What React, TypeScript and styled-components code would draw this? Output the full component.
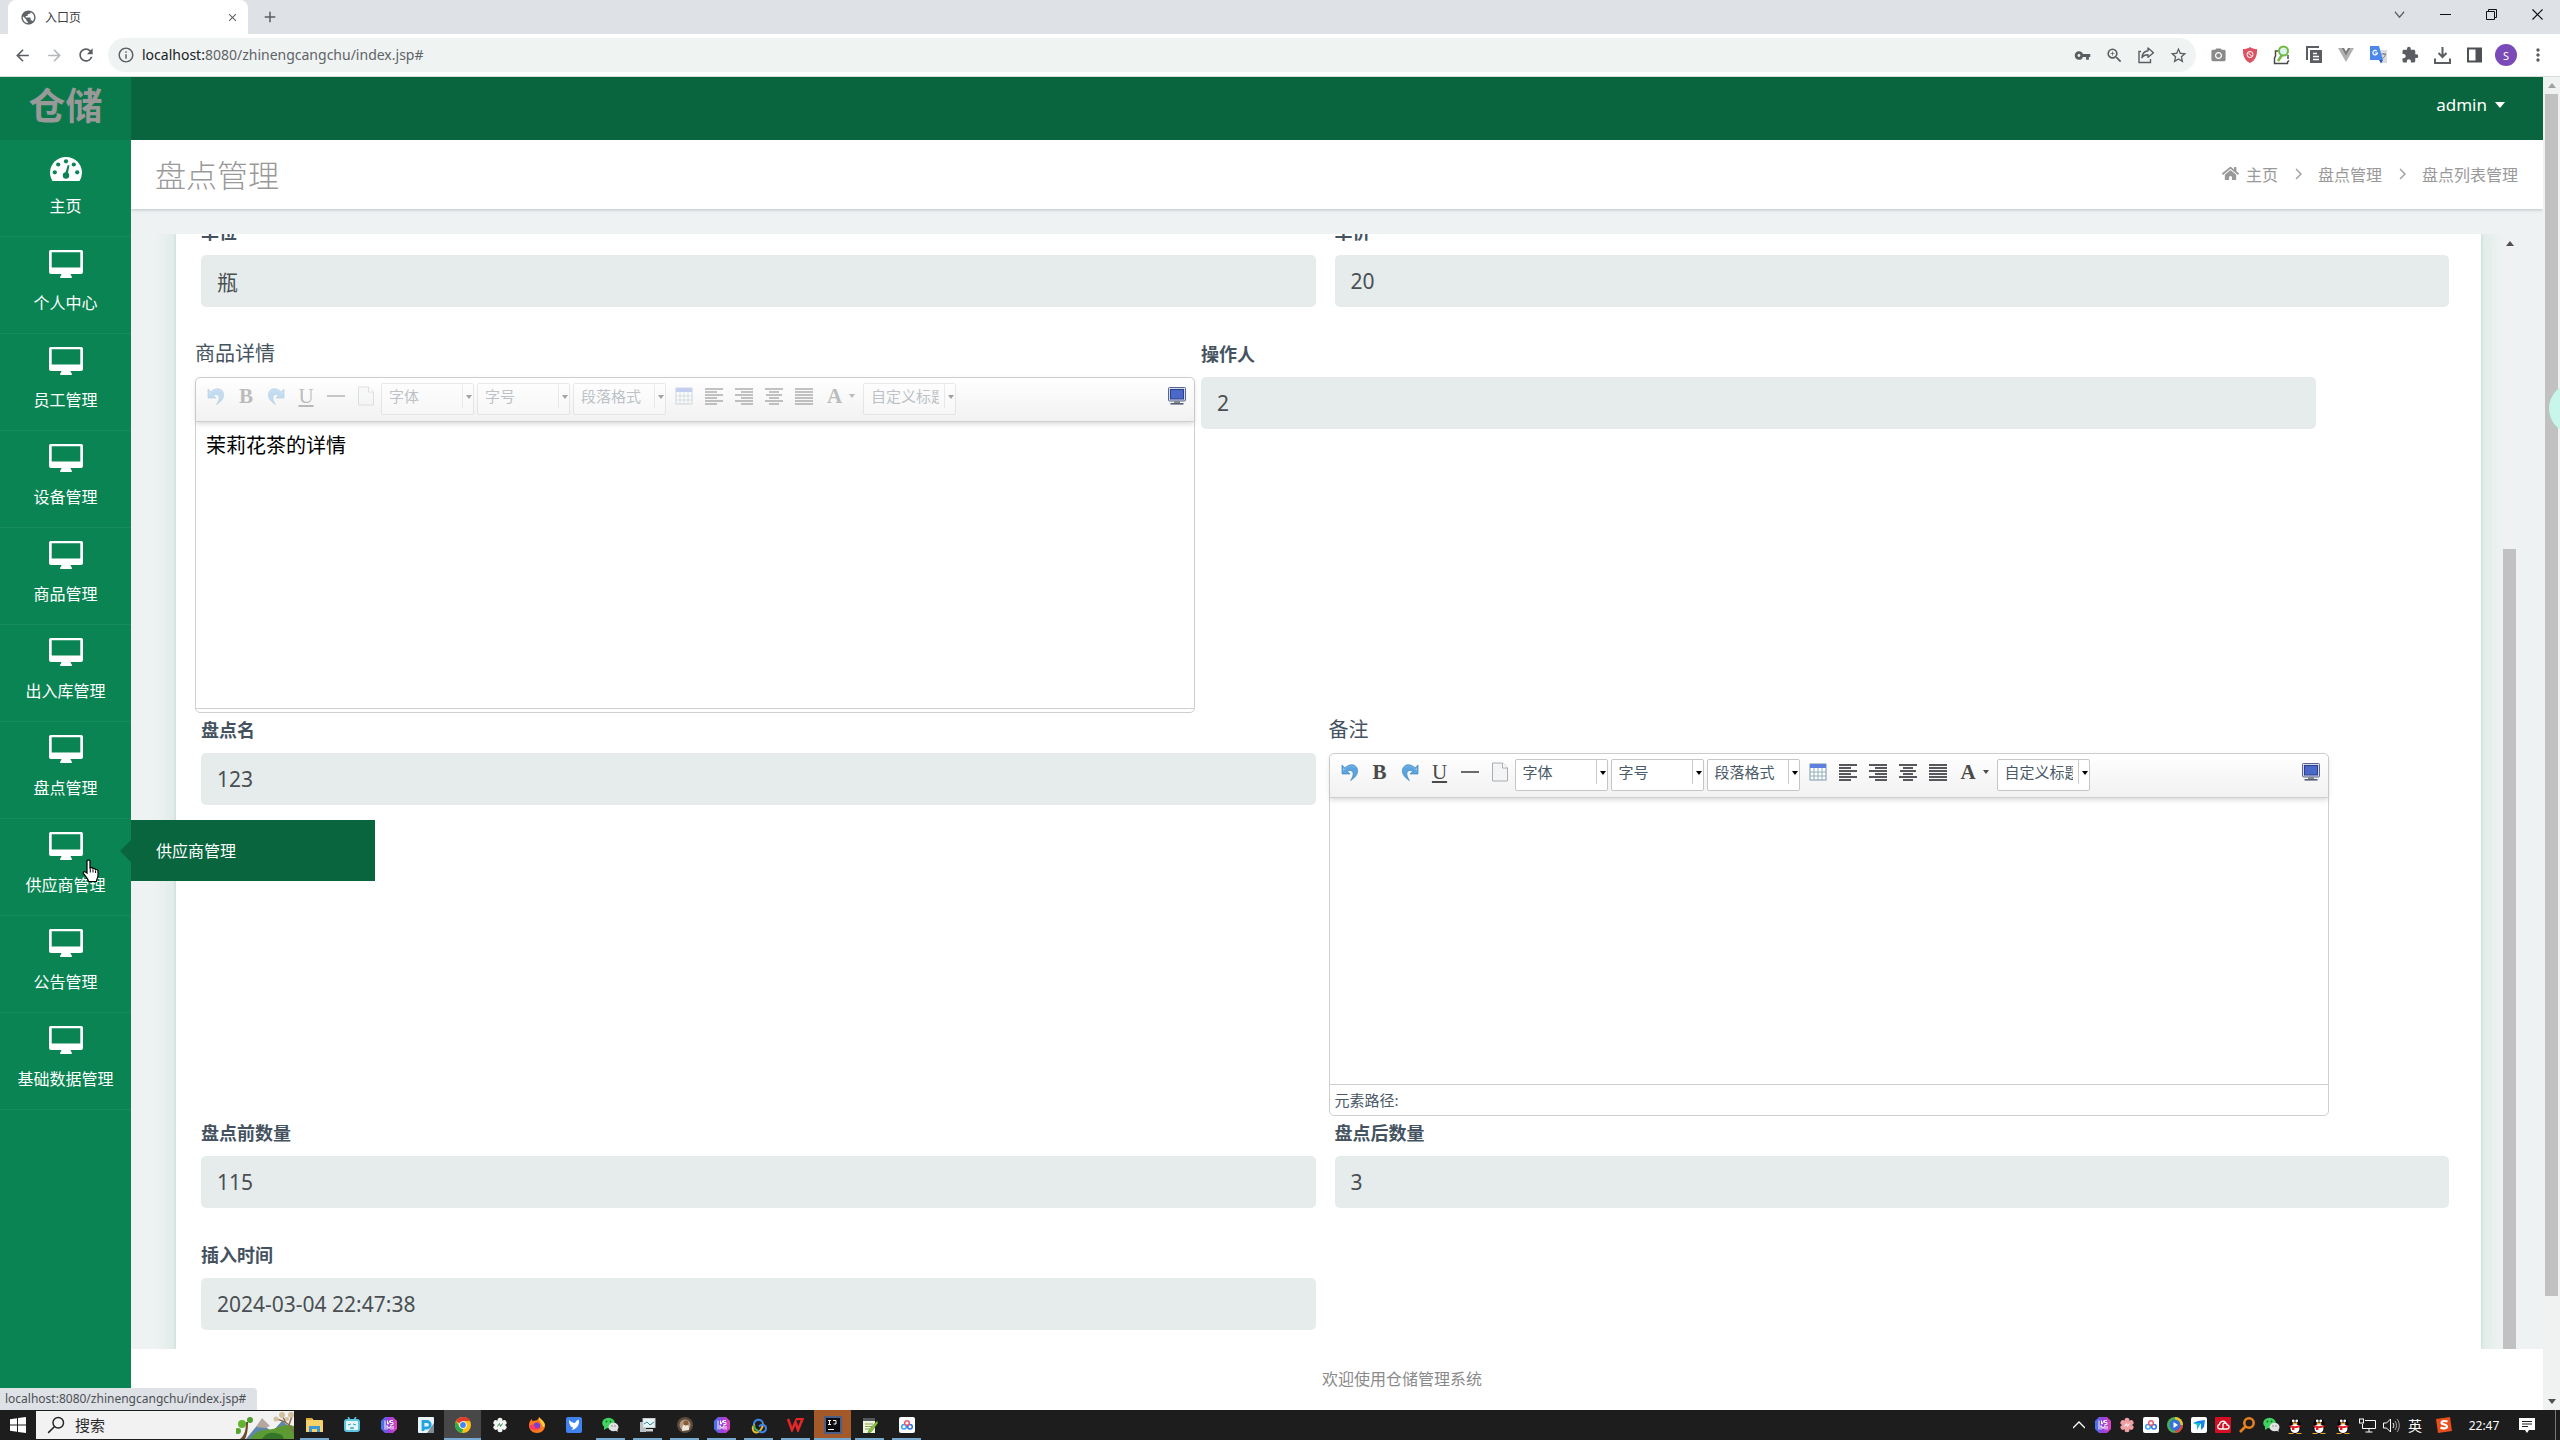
import React from 'react';
import styled, { createGlobalStyle, css } from 'styled-components';
import {
  MdArrowBack, MdArrowForward, MdRefresh, MdInfoOutline, MdVpnKey, MdZoomIn, MdStarBorder,
  MdPublic, MdClose, MdAdd, MdExtension, MdMoreVert, MdPhotoCamera,
} from 'react-icons/md';
import { FaHome } from 'react-icons/fa';

const GlobalStyle = createGlobalStyle`
  *, *::before, *::after { box-sizing: border-box; }
  body { margin: 0; overflow: hidden; font-family: "Noto Sans", "Noto Sans CJK SC", sans-serif; }
  button, input, select, textarea { font: inherit; color: inherit; margin: 0; }
  button { border: 0; padding: 0; background: none; cursor: pointer; }
  a { color: inherit; text-decoration: none; }
  svg { display: block; flex: none; }
`;

const Screen = styled.div`
  display: flex;
  flex-direction: column;
  height: 100vh;
  background: #fff;
`;

/* ---------- browser ---------- */

const TabStrip = styled.div`
  display: flex;
  align-items: center;
  height: 34px;
  padding-left: 8px;
  background: #dee1e5;
  color: #3c4043;
`;

const Tab = styled.div`
  display: flex;
  align-items: center;
  gap: 8px;
  width: 240px;
  height: 34px;
  padding: 0 9px 0 12px;
  border-radius: 8px 8px 0 0;
  background: #fff;
  font-size: 12px;
  svg { color: #5f6368; }
`;

const TabTitle = styled.span`
  flex: 1;
`;

const IconButton = styled.button<{ $w?: number; $dim?: boolean }>`
  display: flex;
  align-items: center;
  justify-content: center;
  width: ${p => p.$w ?? 32}px;
  height: 28px;
  color: ${p => (p.$dim ? '#b4b7ba' : '#5a5e62')};
`;

const WindowButtons = styled.div`
  display: flex;
  align-items: center;
  margin-left: auto;
  height: 28px;
  align-self: flex-start;
`;

const Toolbar = styled.div`
  display: flex;
  align-items: center;
  height: 43px;
  padding: 0 6px;
  border-bottom: 1px solid #d5ddd9;
  background: #fff;
`;

const AddressBar = styled.div`
  display: flex;
  align-items: center;
  flex: 1;
  height: 34px;
  margin: 0 6px 0 6px;
  padding: 0 2px 0 9px;
  border-radius: 17px;
  background: #eff3f2;
  font-size: 14px;
  line-height: 18px;
  color: #5f6368;
`;

const Url = styled.span`
  flex: 1;
  padding-left: 7px;
  b { font-weight: 400; color: #202124; }
`;

const Avatar = styled.span`
  display: flex;
  align-items: center;
  justify-content: center;
  width: 22px;
  height: 22px;
  border-radius: 50%;
  background: #7a4bb8;
  color: #fff;
  font-size: 11px;
`;

/* ---------- page ---------- */

const Page = styled.div`
  position: relative;
  display: flex;
  flex: 1;
  min-height: 0;
`;

const Sidebar = styled.aside`
  position: relative;
  z-index: 2;
  width: 131px;
  background: #0a8453;
  color: #fff;
`;

const Brand = styled.a`
  display: flex;
  align-items: center;
  justify-content: center;
  height: 63px;
  padding-bottom: 10px;
  background: #09794b;
  color: #999;
  font-size: 37px;
  font-weight: 700;
`;

const NavItem = styled.a`
  position: relative;
  display: flex;
  flex-direction: column;
  align-items: center;
  gap: 15px;
  height: 97px;
  padding-top: 13px;
  border-bottom: 1px solid #178b5c;
  font-size: 16px;
  line-height: 20px;
  white-space: nowrap;
`;

const Flyout = styled.span`
  position: absolute;
  left: 131px;
  top: 1px;
  display: flex;
  align-items: center;
  width: 244px;
  height: 61px;
  padding-left: 25px;
  background: #08653e;
  &::before {
    content: '';
    position: absolute;
    right: 100%;
    top: 20px;
    border: 11px solid transparent;
    border-left-width: 0;
    border-right-color: #08653e;
  }
`;

const Cursor = styled.svg`
  position: absolute;
  left: 82px;
  top: 40px;
`;

const Main = styled.main`
  display: flex;
  flex-direction: column;
  flex: 1;
  min-width: 0;
  background: #eff2f3;
`;

const TopBar = styled.header`
  display: flex;
  align-items: center;
  justify-content: flex-end;
  height: 63px;
  padding: 0 38px 8px 0;
  background: #08653e;
  color: #fff;
`;

const UserButton = styled.button`
  display: flex;
  align-items: center;
  gap: 8px;
  color: #fff;
  font-size: 17px;
`;

const TitleBar = styled.div`
  display: flex;
  align-items: center;
  justify-content: space-between;
  height: 69px;
  padding: 0 25px 2px 24px;
  background: #fff;
  box-shadow: 0 1px 3px rgba(90, 110, 120, 0.35);
  color: #999;
`;

const Title = styled.h1`
  margin: 0;
  font-size: 31px;
  font-weight: 300;
`;

const Breadcrumb = styled.nav`
  display: flex;
  align-items: center;
  gap: 14px;
  font-size: 16px;
  a { display: flex; align-items: center; gap: 7px; }
`;

const Viewport = styled.section`
  display: flex;
  flex: 1;
  min-height: 0;
  margin: 25px 27px 0 24px;
  overflow: hidden;
`;

const Scrolled = styled.div`
  flex: 1;
  min-width: 0;
  padding: 0 22px 0 21px;
  overflow: hidden;
`;

const Card = styled.form`
  height: 100%;
  background: #fff;
  box-shadow: 0 0 3px rgba(90, 130, 170, 0.25), 0 0 16px 10px rgba(40, 165, 90, 0.08);
  overflow: hidden;
`;

const FormBody = styled.div`
  margin-top: -14px;
`;

const Row = styled.div<{ $tight?: boolean }>`
  display: flex;
  gap: ${p => (p.$tight ? 6 : 19)}px;
  padding: 0 31px 0 25px;
`;

const FieldCell = styled.div`
  flex: none;
  width: calc(50% - 10px);
  margin-bottom: 35px;
`;

const EditorCell = styled.div`
  flex: none;
  width: 1000px;
  margin-left: -6px;
  margin-bottom: 5px;
`;

const Label = styled.label<{ $plain?: boolean }>`
  display: block;
  margin-bottom: 11px;
  font-size: ${p => (p.$plain ? 20 : 18)}px;
  font-weight: ${p => (p.$plain ? 400 : 700)};
  line-height: 24px;
  color: #44535f;
`;

const TextInput = styled.input`
  display: block;
  width: 100%;
  height: 52px;
  padding: 0 16px;
  border: 0;
  border-radius: 5px;
  background: #e6ecec;
  color: #4a4f53;
  font-size: 21px;
  outline: none;
`;

const EditorBox = styled.div`
  border: 1px solid #cfcfcf;
  border-radius: 5px;
  background: #fff;
`;

const EditorTools = styled.div`
  display: flex;
  align-items: flex-start;
  height: 44px;
  padding: 5px 2px 0 5px;
  border-bottom: 1px solid #cfcfcf;
  border-radius: 5px 5px 0 0;
  background: linear-gradient(#fff, #f1f1f1);
  box-shadow: 0 2px 5px rgba(170, 170, 170, 0.45);
`;

const ToolGroup = styled.div<{ $off?: boolean }>`
  display: flex;
  flex: 1;
  ${p => p.$off && css`opacity: 0.35;`}
`;

const Tool = styled.button<{ $wide?: boolean }>`
  display: flex;
  align-items: center;
  justify-content: center;
  gap: 7px;
  width: ${p => (p.$wide ? 44 : 30)}px;
  height: 26px;
  color: #4a4a4a;
  font-family: "Liberation Serif", serif;
  font-size: 21px;
  font-weight: 700;
  line-height: 26px;
`;

const Underlined = styled.span`
  text-decoration: underline;
  font-weight: 400;
`;

const SelectBox = styled.span`
  display: flex;
  align-items: flex-start;
  width: 93px;
  height: 32px;
  margin-right: 3px;
  border: 1px solid #c6c6c6;
  border-radius: 2px;
  background: #fff;
  svg { margin: 11px 0 0 3px; }
`;

const Select = styled.select`
  width: 81px;
  height: 24px;
  padding: 0 5px 0 7px;
  border: 0;
  border-right: 1px solid #ccc;
  background: transparent;
  appearance: none;
  color: #4a5a68;
  font-size: 15px;
  outline: none;
  opacity: 1;
`;

const EditorArea = styled.textarea`
  display: block;
  width: 100%;
  height: 286px;
  padding: 9px 10px;
  border: 0;
  background: transparent;
  color: #000;
  font-size: 20px;
  line-height: 30px;
  resize: none;
  outline: none;
`;

const EditorFoot = styled.div<{ $path?: boolean }>`
  height: ${p => (p.$path ? 31 : 4)}px;
  padding-left: 5px;
  border-top: 1px solid #cfcfcf;
  font-size: 15px;
  line-height: 31px;
  color: #4a5a68;
`;

const Footer = styled.footer`
  height: 61px;
  padding-left: 130px;
  background: #fff;
  color: #8a8a8a;
  font-size: 16px;
  line-height: 61px;
  text-align: center;
`;

const Track = styled.div<{ $w: number; $edge?: number }>`
  display: flex;
  flex-direction: column;
  flex: none;
  width: ${p => p.$w}px;
  padding: 0 ${p => p.$edge ?? 0}px;
  background: #f0f1f1;
`;

const TrackArrow = styled.span<{ $h: number; $down?: boolean; $soft?: boolean }>`
  display: flex;
  align-items: center;
  justify-content: center;
  height: ${p => p.$h}px;
  margin-top: ${p => (p.$down ? 'auto' : '0')};
  color: ${p => (p.$soft ? '#a0a0a0' : '#505050')};
`;

const OuterThumb = styled.span`
  height: calc(100% - 131px);
  background: #c1c1c1;
`;

const InnerThumb = styled.span`
  flex: 1;
  margin-top: 297px;
  background: #c1c1c1;
`;

const BubbleClip = styled.div`
  position: absolute;
  inset: 0;
  overflow: hidden;
  pointer-events: none;
`;

const Bubble = styled.span`
  position: absolute;
  right: -40px;
  top: 306px;
  z-index: 3;
  width: 51px;
  height: 51px;
  border-radius: 50%;
  background: #c9f6eb;
`;

const StatusBubble = styled.div`
  position: absolute;
  left: 0;
  bottom: 0;
  z-index: 4;
  min-width: 257px;
  height: 22px;
  padding: 0 7px 0 5px;
  border-radius: 0 4px 0 0;
  background: #dee1e5;
  color: #4c5054;
  font-size: 12px;
  line-height: 22px;
`;

/* ---------- taskbar ---------- */

const Taskbar = styled.footer`
  display: flex;
  align-items: center;
  height: 30px;
  background: #1d1d1d;
  color: #fff;
`;

const StartButton = styled.button`
  display: flex;
  align-items: center;
  justify-content: center;
  width: 36px;
  height: 30px;
`;

const SearchBox = styled.label`
  display: flex;
  align-items: center;
  width: 258px;
  height: 28px;
  padding-left: 11px;
  background: #f2f2f2;
  color: #222;
  overflow: hidden;
`;

const SearchInput = styled.input`
  flex: 1;
  min-width: 0;
  height: 26px;
  padding: 0 0 0 10px;
  border: 0;
  background: transparent;
  font-size: 15px;
  outline: none;
  &::placeholder { color: #2b2b2b; opacity: 1; }
`;

const Apps = styled.div`
  display: flex;
  padding-left: 2px;
`;

const AppButton = styled.button<{ $open?: boolean; $tone?: string }>`
  display: flex;
  align-items: center;
  justify-content: center;
  width: 37px;
  height: 30px;
  background: ${p => p.$tone ?? 'transparent'};
  box-shadow: ${p => (p.$open ? 'inset 0 -2px 0 #76a9cf' : 'none')};
  border: 0 solid #1d1d1d;
  border-width: ${p => (p.$tone ? '0' : '0 4px')};
`;

const Tray = styled.div`
  display: flex;
  align-items: center;
  margin-left: auto;
  padding-right: 4px;
`;

const TrayItem = styled.button<{ $w?: number }>`
  display: flex;
  align-items: center;
  justify-content: center;
  width: ${p => p.$w ?? 24}px;
  height: 30px;
  color: #fff;
  font-size: ${p => (p.$w === 46 ? 12 : 14)}px;
`;

const DesktopEdge = styled.span`
  width: 1px;
  height: 30px;
  background: #777;
`;

/* ---------- drawings ---------- */

const Caret = ({ w = 6, up = false }: { w?: number; up?: boolean }) => (
  <svg width={w} height={w / 2 + 1} viewBox="0 0 10 6" preserveAspectRatio="none">
    <path d={up ? 'M0 6h10L5 0z' : 'M0 0h10L5 6z'} fill="currentColor" />
  </svg>
);

const Monitor = () => (
  <svg width="34" height="28" viewBox="0 0 34 28">
    <path
      fill="currentColor"
      fillRule="evenodd"
      d="M2.500 0h29A2 2 0 0 1 34 2.300v19.500A2.200 2.200 0 0 1 31.500 24H21.500c0 1.500 1.500 2.200 1.500 3.200 0 .5-.4.8-.8.8H11.800c-.4 0-.8-.3-.8-.8 0-1 1.500-1.700 1.500-3.200H2.500A2.200 2.200 0 0 1 0 21.800V2.300A2 2 0 0 1 2.500 0zM2.700 2.200v15.300h28.600V2.200z"
    />
  </svg>
);

const Gauge = () => (
  <svg width="34" height="28" viewBox="0 0 34 28">
    <path fill="currentColor" d="M17 4C8 4 1 11 1 19.600c0 3 .8 5.600 2.200 7.800.3.400.7.600 1.200.6h25.200c.5 0 .9-.2 1.200-.6A15 15 0 0 0 33 19.600C33 11 26 4 17 4z" />
    <g fill="#0a8453">
      <circle cx="17" cy="8.300" r="2.100" />
      <circle cx="9.200" cy="11.500" r="2.100" />
      <circle cx="24.800" cy="11.500" r="2.100" />
      <circle cx="5.800" cy="19.300" r="2.100" />
      <circle cx="28.200" cy="19.300" r="2.100" />
      <circle cx="17" cy="22.500" r="3.200" />
      <path d="M16 21l2.800-9 1.600.5L18.600 22z" />
    </g>
  </svg>
);

const ArrowBlue = ({ flip }: { flip?: boolean }) => (
  <svg width="20" height="20" viewBox="0 0 20 20">
    <g transform={flip ? 'translate(20 0) scale(-1 1)' : undefined}>
      <path d="M2 3v9h8L7.500 9.400c2.500-2 5.500-.8 5.600 2.200.1 2.200-.8 4.300-2.600 6.900 4.500-2.600 7.200-6.200 7.100-10C17.400 3 10.500.2 4.800 6z" fill="#5da4df" stroke="#3f86c4" strokeWidth=".7" />
      <path d="M3 5v4l2-2c4-5 10-4 11.500 1C14 3 8 3 5 8z" fill="#9fd0f5" opacity=".7" />
    </g>
  </svg>
);

const Sheet = () => (
  <svg width="18" height="20" viewBox="0 0 18 20">
    <path d="M1.500 1h10l5 5v13h-15z" fill="#f2f4f6" stroke="#a9adb1" />
    <path d="M11.500 1v5h5" fill="#fff" stroke="#a9adb1" />
  </svg>
);

const TableIcon = () => (
  <svg width="18" height="18" viewBox="0 0 18 18">
    <rect x="1" y="1" width="16" height="16" fill="#fff" stroke="#7f93ad" />
    <rect x="1" y="1" width="16" height="4" fill="#5c7fe0" />
    <path d="M1 9h16M1 13h16M5 5v12M9 5v12M13 5v12" stroke="#8fb0b4" />
  </svg>
);

const Align = ({ rows }: { rows: [number, number][] }) => (
  <svg width="18" height="17" viewBox="0 0 18 17">
    {rows.map(([x, w], i) => (
      <rect key={i} x={x} y={i * 3} width={w} height="2" fill="#58585c" />
    ))}
  </svg>
);

const FULL: [number, number] = [0, 18];
const alignLeft: [number, number][] = [FULL, [0, 12], FULL, [0, 12], FULL, [0, 12]];
const alignRight: [number, number][] = [FULL, [6, 12], FULL, [6, 12], FULL, [6, 12]];
const alignCenter: [number, number][] = [FULL, [4, 10], [1, 16], [4, 10], FULL, [4, 10]];
const alignJustify: [number, number][] = [FULL, FULL, FULL, FULL, FULL, FULL];

const FullScreen = () => (
  <svg width="18" height="18" viewBox="0 0 18 18">
    <rect x=".5" y=".5" width="17" height="13.500" rx="1" fill="#d6dcec" stroke="#59648a" />
    <rect x="2.500" y="2.500" width="13" height="9.500" fill="#4a68c8" stroke="#2d3f8a" />
    <path d="M6 14h6v2H6z" fill="#888" />
    <path d="M2.500 16h13v1.600h-13z" fill="#555f78" />
  </svg>
);

const Share = () => (
  <svg width="18" height="18" viewBox="0 0 18 18" fill="none" stroke="currentColor" strokeWidth="1.400">
    <path d="M4 5.500H2V16.500h11.500V13" />
    <path d="M11 2l5.500 4.700L11 11.300V8.700c-3 0-4.800.8-6 3 .2-3.800 2.400-6.500 6-7z" strokeLinejoin="round" />
  </svg>
);

const Shield = () => (
  <svg width="16" height="18" viewBox="0 0 16 18">
    <path d="M8 1c2 1.500 4.500 2 7 2 .3 6.500-1.500 11.500-7 14C2.500 14.500.7 9.500 1 3c2.500 0 5-.5 7-2z" fill="#dc5464" />
    <circle cx="8" cy="8.500" r="3" fill="none" stroke="#fff" />
    <path d="M6 6.500l4 4" stroke="#fff" />
  </svg>
);

const BagSearch = () => (
  <svg width="18" height="20" viewBox="0 0 18 20" fill="none">
    <path d="M5 6H2.500v5L1.500 13v5.500h13V17l1.500-1.500" stroke="#4b4b4b" strokeWidth="1.500" />
    <path d="M15 10v4" stroke="#4b4b4b" strokeWidth="1.500" />
    <path d="M9 10l-4 6" stroke="#72b944" strokeWidth="2.500" />
    <circle cx="10.500" cy="6" r="4.500" fill="#dcf3ee" stroke="#72b944" strokeWidth="2" />
  </svg>
);

const CopyPages = () => (
  <svg width="17" height="18" viewBox="0 0 17 18">
    <path d="M1 14V1h12" fill="none" stroke="#5a5e62" strokeWidth="2" />
    <path d="M4 4h12v13H4z" fill="#5a5e62" />
    <path d="M7 7.500h4M7 10.500h6M7 13.500h6" stroke="#fff" strokeWidth="1.300" />
  </svg>
);

const Vue = () => (
  <svg width="16" height="14" viewBox="0 0 16 14">
    <path d="M0 0h3.500L8 8l4.500-8H16L8 14z" fill="#b0b0b0" />
    <path d="M3.500 0H6l2 3.500L10 0h2.500L8 8z" fill="#7b7b7b" />
  </svg>
);

const Translate = () => (
  <svg width="17" height="18" viewBox="0 0 17 18">
    <path d="M7 4h10v13H11z" fill="#dadde0" />
    <path d="M0 0h9l4 14H0z" fill="#4c87ea" />
    <path d="M9 14h4l-2 3.500z" fill="#2a5bb8" />
    <path d="M7.500 6.500A2.300 2.300 0 1 1 6.800 5M7.500 7H5" fill="none" stroke="#fff" strokeWidth="1.200" />
    <path d="M11.500 8h4.500M13.800 7v1M15.500 8c-.5 2-1.500 3.500-3 4.500" fill="none" stroke="#70757a" />
  </svg>
);

const Download = () => (
  <svg width="17" height="18" viewBox="0 0 17 18" fill="none" stroke="currentColor" strokeWidth="2">
    <path d="M8.500 1v9M4.500 7l4 4 4-4M1 12.500V17h15v-4.500" />
  </svg>
);

const SidePanel = () => (
  <svg width="15" height="16" viewBox="0 0 15 16">
    <rect x="1" y="1.500" width="13" height="13" fill="#fff" stroke="#4d5155" strokeWidth="2" />
    <path d="M8.500 1.500H14v13H8.500z" fill="#4d5155" />
  </svg>
);

const Hand = () => (
  <Cursor width="18" height="24" viewBox="0 0 18 24">
    <path
      d="M5 1.800C5 .7 8 .7 8 1.800V9l1-.6c1 0 1.700.4 1.900 1.200 1.200-.5 2.200 0 2.500 1 1.300-.3 2.600.3 2.600 1.600v4c0 2.400-1.300 3.800-1.600 6.300H6.600C6 19.500 3.500 17.300 1.500 14.600c-.9-1.300.7-2.700 2-1.700L5 14z"
      fill="#fff" stroke="#000" strokeWidth="1.200"
    />
    <path d="M8.300 9.500v4M11 10.500v3M13.600 11.500v2.500" stroke="#000" />
  </Cursor>
);

const Landscape = () => (
  <svg width="58" height="28" viewBox="0 0 58 28">
    <path d="M10 28l14-17 12 10 10-11 12 9v9z" fill="#5f86ad" />
    <path d="M20 16l6-9 8 8-5 2z" fill="#b6a79e" />
    <path d="M14 28c8-12 20-8 26-11s12-4 18-2v13z" fill="#5d9a34" />
    <path d="M26 28c6-9 14-6 20-4l2 4z" fill="#35752a" />
    <path d="M4 28c5-4 6-10 6-17h2c0 8-1 13-3 17z" fill="#6d4a2b" />
    <circle cx="6" cy="13" r="4" fill="#63b52f" /><circle cx="14" cy="9" r="3" fill="#4f9f2a" /><circle cx="2" cy="20" r="3" fill="#55a52c" />
    <path d="M58 22c-3-8-8-12-18-14M50 12l-4-8M53 14l3-9" stroke="#8a6a4f" strokeWidth="1.500" fill="none" />
    <g fill="#d2c19f"><circle cx="40" cy="8" r="2.500" /><circle cx="46" cy="4" r="3" /><circle cx="55" cy="4" r="3" /><circle cx="51" cy="8" r="2" /></g>
  </svg>
);

const Folder = () => (
  <svg width="17" height="16" viewBox="0 0 17 16">
    <path d="M0 1h6l1.500 2H16a1 1 0 0 1 1 1v11H0z" fill="#f7d26a" /><path d="M0 1h6v2H0z" fill="#e0a93b" />
    <path d="M3 15V9h11v6h-3v-3H6v3z" fill="#3f97d3" />
  </svg>
);
const TvFace = () => (
  <svg width="16" height="16" viewBox="0 0 16 16">
    <path d="M4 0l2 3M12 0l-2 3" stroke="#5cc4e4" strokeWidth="1.500" />
    <rect x="1" y="3" width="14" height="11" rx="2" fill="#e4f8fd" stroke="#5cc4e4" strokeWidth="2" />
    <path d="M4 8l3-1M12 8L9 7M6 11h4" stroke="#3ba7ca" strokeWidth="1.300" />
  </svg>
);
const PurpleBadge = () => (
  <svg width="16" height="16" viewBox="0 0 16 16">
    <defs><linearGradient id="badge" x1="0" x2="1" y1="0" y2="0"><stop offset="0" stopColor="#3a7bea" /><stop offset=".5" stopColor="#9a3fe0" /><stop offset="1" stopColor="#e243b8" /></linearGradient></defs>
    <path d="M4 0h8l4 4v8l-4 4H4l-4-4V4z" fill="url(#badge)" />
    <path d="M4 3.500v9M6.500 3.500v3.500M9 3.500l-2 4M12 3.500H9.500v2H12v2H9.500M6 12.500v-4l2 3 2-3v4M12 9v3.500" stroke="#fff" fill="none" />
  </svg>
);
const PApp = () => (
  <svg width="16" height="16" viewBox="0 0 16 16">
    <rect width="16" height="16" rx="1" fill="#e9f5fb" /><path d="M16 6v10H9z" fill="#7f8d94" />
    <path d="M5 14V4.500h4a3.200 3.200 0 0 1 0 6.500H5" fill="none" stroke="#23a5e0" strokeWidth="2.800" />
  </svg>
);
const Chrome = () => (
  <svg width="16" height="16" viewBox="0 0 16 16">
    <circle cx="8" cy="8" r="8" fill="#fbc116" />
    <path d="M8 8L1 4.200A8 8 0 0 1 15 4H8z" fill="#e33b2e" /><path d="M1 4.200L4.600 10 8 12l-1 4A8 8 0 0 1 1 4.200z" fill="#2da94f" />
    <circle cx="8" cy="8" r="3.800" fill="#fff" /><circle cx="8" cy="8" r="2.900" fill="#4285f4" />
  </svg>
);
const Flower = ({ c, d }: { c: string; d: string }) => (
  <svg width="16" height="16" viewBox="0 0 16 16">
    {[0, 60, 120, 180, 240, 300].map(a => <circle key={a} cx="8" cy="3.300" r="2.500" fill={c} transform={`rotate(${a} 8 8)`} />)}
    <circle cx="8" cy="8" r="4" fill={c} /><path d="M5.500 9.500l2-3 1 3 2-3" stroke={d} fill="none" />
  </svg>
);
const Firefox = () => (
  <svg width="16" height="16" viewBox="0 0 16 16">
    <path d="M10 0c1 2 5.500 3.500 6 8.500C16 13 12.500 16 8 16S0 12.500 0 8.500C0 6 1 4 2.500 2l1 2C6 3.500 9 4 10 0z" fill="#ff7a1f" />
    <path d="M10 0c1 2 5.500 3.500 6 8.500-1 2-2 2-3 0C12 5 9.500 4.500 10 0z" fill="#ffcb38" />
    <circle cx="7.800" cy="9" r="3.500" fill="#7a3fd0" /><path d="M0 9c3-2 4-1 6 0-1 2 2 3 5 1-1 4-9 5-11-1z" fill="#ff3d5a" />
  </svg>
);
const Bird = () => (
  <svg width="16" height="16" viewBox="0 0 16 16">
    <rect width="16" height="16" rx="2" fill="#3f82f0" /><path d="M3 3c2 2 4 3 6 3 1-2 2-3 4-3.500-.5 1 0 1.500 0 3C12.500 9 10 12 6 13c0-1 1-1.500 1-2.500C4.500 10 3 7 3 3z" fill="#fff" />
  </svg>
);
const Wechat = () => (
  <svg width="17" height="16" viewBox="0 0 17 16">
    <ellipse cx="6.500" cy="6" rx="6.300" ry="5.300" fill="#3fd45f" /><path d="M2 9l0 4 3-2z" fill="#3fd45f" />
    <circle cx="4.500" cy="4.500" r=".9" fill="#14682a" /><circle cx="8.500" cy="4.500" r=".9" fill="#14682a" />
    <ellipse cx="11.500" cy="10" rx="5" ry="4.300" fill="#e2e2e2" /><path d="M13 13l2.500 2v-3z" fill="#e2e2e2" />
    <circle cx="10" cy="9" r=".7" fill="#777" /><circle cx="13" cy="9" r=".7" fill="#777" />
  </svg>
);
const Perf = () => (
  <svg width="17" height="16" viewBox="0 0 17 16">
    <rect x="1" y="5" width="6" height="10" fill="#b9bfc2" /><rect x="4" y="1.500" width="12" height="9" fill="#e9f6f8" stroke="#c9ced0" />
    <path d="M5 7l3-2 3 3 4-3" stroke="#2d8dab" fill="none" /><path d="M7 12h7v2.500H7z" fill="#c9ced0" />
  </svg>
);
const Photo = () => (
  <svg width="16" height="16" viewBox="0 0 16 16">
    <circle cx="8" cy="8" r="8" fill="#5d4a3c" /><circle cx="8" cy="8" r="5.500" fill="#b29a82" /><path d="M5 14c0-5 1-7 4-7s3 4 3 6z" fill="#efe6da" /><circle cx="9" cy="6" r="2.500" fill="#8a5a35" />
  </svg>
);
const Rings = () => (
  <svg width="17" height="17" viewBox="0 0 17 17" fill="none" strokeWidth="2">
    <path d="M4 8a4.500 4.500 0 1 1 9-1.500" stroke="#3d86e8" /><path d="M13 6.500c0 4-3 9-7 9a4 4 0 0 1-1-7.500" stroke="#f0b72c" /><path d="M9 9.500c3-3 7-1.500 7 2s-4.500 5-7 2.500" stroke="#3d86e8" /><path d="M4 8c0 3 2 5 4.500 6" stroke="#3fae5d" />
  </svg>
);
const Wps = () => (
  <svg width="17" height="14" viewBox="0 0 17 14" fill="none" stroke="#e32626" strokeWidth="2.600">
    <path d="M1 1l4 11 3.500-8L11 12l4.500-11H9" />
  </svg>
);
const Idea = () => (
  <svg width="18" height="18" viewBox="0 0 18 18">
    <rect width="18" height="18" fill="#4b5f86" /><rect x="2" y="2" width="14" height="14" fill="#0b0b10" />
    <path d="M4 4.500h3M5.500 4.500v4M4 8.500h3M9 4.500h3v3.500H9.500M4 13.500h6" stroke="#fff" fill="none" />
  </svg>
);
const Note = () => (
  <svg width="16" height="17" viewBox="0 0 16 17">
    <path d="M1 2h12v14H1z" fill="#eef3d9" /><path d="M1 1h12v3H1z" fill="#55585a" /><path d="M3 7h8M3 9.500h7M3 12h5" stroke="#8aa35d" />
    <path d="M15 4l-8 9-1 3 3-1 7-9z" fill="#8ac83b" stroke="#42681c" strokeWidth=".5" />
  </svg>
);
const Cloud = () => (
  <svg width="16" height="16" viewBox="0 0 16 16">
    <rect width="16" height="16" rx="2" fill="#fff" /><g fill="none" strokeWidth="1.500"><circle cx="5" cy="9.700" r="2.300" stroke="#35a4f0" /><circle cx="11" cy="9.700" r="2.300" stroke="#2b6fe8" /><circle cx="8" cy="6" r="2.300" stroke="#ef5a6b" /></g>
  </svg>
);
const Player = () => (
  <svg width="16" height="16" viewBox="0 0 16 16">
    <circle cx="8" cy="8" r="8" fill="#45b058" /><path d="M8 0a8 8 0 0 1 8 8h-8z" fill="#f2c230" /><path d="M8 16a8 8 0 0 0 8-8H8z" fill="#e2453b" /><circle cx="8" cy="8" r="5.500" fill="#3471d9" /><path d="M6.500 5l4.500 3-4.500 3z" fill="#fff" />
  </svg>
);
const Todesk = () => (
  <svg width="16" height="16" viewBox="0 0 16 16"><rect width="16" height="16" rx="2" fill="#fff" /><path d="M2 6l5-2 7-1-1 7-3 3V7z" fill="#1785e8" /><path d="M2 6h8L6 13V8z" fill="#16c2c9" /></svg>
);
const RedCloud = () => (
  <svg width="16" height="16" viewBox="0 0 16 16"><rect width="16" height="16" rx="1" fill="#d30f23" /><path d="M4.500 12a2.300 2.300 0 0 1 0-4.500A3.500 3.500 0 0 1 11 6M8 12h4a2 2 0 0 0 0-4 2 2 0 0 0-4 0zM4.500 12H8" fill="none" stroke="#fff" strokeWidth="1.300" /></svg>
);
const Magnify = ({ c, w = 2, size = 16 }: { c: string; w?: number; size?: number }) => (
  <svg width={size} height={size} viewBox="0 0 16 16" fill="none" stroke={c} strokeWidth={w}><circle cx="10" cy="6" r="4.700" /><path d="M6.500 9.500L1 15" /></svg>
);
const Penguin = () => (
  <svg width="16" height="17" viewBox="0 0 16 17">
    <ellipse cx="8" cy="9" rx="6" ry="7.500" fill="#050505" /><ellipse cx="8" cy="11.500" rx="4.500" ry="4.500" fill="#fff" />
    <circle cx="6.300" cy="4" r="1.400" fill="#fff" /><circle cx="9.700" cy="4" r="1.400" fill="#fff" /><ellipse cx="8" cy="6.300" rx="2.500" ry=".9" fill="#f3a51d" />
    <path d="M2.500 8c3 1.500 8 1.500 11 0v2c-3 1-5 1-6 1v2H5v-2.300L2.500 10z" fill="#e02020" /><path d="M1.500 16h5v1h-5zM9.500 16h5v1h-5z" fill="#f3a51d" />
  </svg>
);
const Network = () => (
  <svg width="17" height="15" viewBox="0 0 17 15" fill="none" stroke="#fff"><path d="M6 2.500h10.500v8H3.500V6M10 10.500v3.500M6.500 14h7" /><rect x=".5" y="1" width="4" height="4" /></svg>
);
const Volume = () => (
  <svg width="17" height="15" viewBox="0 0 17 15" fill="none" stroke="#fff"><path d="M.5 5h3l4-4v13l-4-4h-3zM10 5c1 1.500 1 3.500 0 5" /><path d="M12 3c2 2.500 2 6.500 0 9M14 1c3 3.500 3 9.500 0 13" opacity=".6" /></svg>
);
const Sogou = () => (
  <svg width="16" height="16" viewBox="0 0 16 16"><path d="M0 2l14-2 2 14-14 2z" fill="#e84e1c" /><path d="M11.500 4.500c-3-1-6-.5-6 1.200C5.500 8 11 7 11 9.600c0 2-4 2.300-6.500 1" fill="none" stroke="#fff" strokeWidth="2.200" /></svg>
);
const Notice = () => (
  <svg width="16" height="15" viewBox="0 0 16 15"><path d="M0 0h16v12h-6l-2 3-2-3H0z" fill="#fff" /><path d="M3 3.500h10M3 6h10M3 8.500h6" stroke="#1d1d1d" /></svg>
);
const Chevron = ({ d, size = 12 }: { d: string; size?: number }) => (
  <svg width={size} height={size} viewBox="0 0 12 12" fill="none" stroke="currentColor" strokeWidth="1.300"><path d={d} /></svg>
);

/* ---------- parts ---------- */

function Field({ id, label, value }: { id: string; label: string; value: string }) {
  return (
    <FieldCell>
      <Label htmlFor={id}>{label}</Label>
      <TextInput id={id} defaultValue={value} readOnly />
    </FieldCell>
  );
}

function Picker({ label }: { label: string }) {
  return (
    <SelectBox>
      <Select aria-label={label}><option>{label}</option></Select>
      <Caret />
    </SelectBox>
  );
}

function Editor({ id, label, value, off }: { id: string; label: string; value: string; off?: boolean }) {
  return (
    <EditorCell>
      <Label htmlFor={id} $plain>{label}</Label>
      <EditorBox>
        <EditorTools>
          <ToolGroup $off={off}>
            <Tool type="button" aria-label="撤销"><ArrowBlue /></Tool>
            <Tool type="button">B</Tool>
            <Tool type="button" aria-label="重做"><ArrowBlue flip /></Tool>
            <Tool type="button"><Underlined>U</Underlined></Tool>
            <Tool type="button" aria-label="分隔线"><svg width="18" height="2"><rect width="18" height="2" fill="#6a6a6a" /></svg></Tool>
            <Tool type="button" aria-label="清空文档"><Sheet /></Tool>
            <Picker label="字体" />
            <Picker label="字号" />
            <Picker label="段落格式" />
            <Tool type="button" aria-label="插入表格"><TableIcon /></Tool>
            <Tool type="button" aria-label="居左对齐"><Align rows={alignLeft} /></Tool>
            <Tool type="button" aria-label="居右对齐"><Align rows={alignRight} /></Tool>
            <Tool type="button" aria-label="居中对齐"><Align rows={alignCenter} /></Tool>
            <Tool type="button" aria-label="两端对齐"><Align rows={alignJustify} /></Tool>
            <Tool type="button" $wide>A<Caret /></Tool>
            <Picker label="自定义标题" />
          </ToolGroup>
          <Tool type="button" aria-label="全屏"><FullScreen /></Tool>
        </EditorTools>
        <EditorArea id={id} defaultValue={value} readOnly={off} />
        <EditorFoot $path={!off}>{off ? null : '元素路径:'}</EditorFoot>
      </EditorBox>
    </EditorCell>
  );
}

const menu = ['主页', '个人中心', '员工管理', '设备管理', '商品管理', '出入库管理', '盘点管理', '供应商管理', '公告管理', '基础数据管理'];
const hovered = '供应商管理';

const apps: { icon: React.ReactNode; name: string; open?: boolean; tone?: string }[] = [
  { name: '文件资源管理器', icon: <Folder />, open: true },
  { name: '哔哩哔哩', icon: <TvFace /> },
  { name: '录屏', icon: <PurpleBadge /> },
  { name: 'P', icon: <PApp /> },
  { name: 'Chrome', icon: <Chrome />, open: true, tone: '#484848' },
  { name: '花', icon: <Flower c="#f3f7f3" d="#3d8a5c" /> },
  { name: 'Firefox', icon: <Firefox /> },
  { name: '飞鸟', icon: <Bird /> },
  { name: '微信', icon: <Wechat />, open: true },
  { name: '性能', icon: <Perf />, open: true },
  { name: '照片', icon: <Photo />, open: true },
  { name: '录屏二', icon: <PurpleBadge />, open: true },
  { name: '圆环', icon: <Rings />, open: true },
  { name: 'WPS', icon: <Wps />, open: true },
  { name: 'IDEA', icon: <Idea />, open: true, tone: '#a3592a' },
  { name: '记事本', icon: <Note />, open: true },
  { name: '网盘', icon: <Cloud />, open: true },
];

const tray: React.ReactNode[] = [
  <Chevron key="c" d="M0 9l6-6 6 6" />, <PurpleBadge key="b" />, <Flower key="f" c="#f0a0a4" d="#fff" />, <Cloud key="n" />,
  <Player key="p" />, <Todesk key="t" />, <RedCloud key="r" />, <Magnify key="m" c="#e8801e" w={2.6} />, <Wechat key="w" />,
  <Penguin key="q1" />, <Penguin key="q2" />, <Penguin key="q3" />, <Network key="net" />, <Volume key="v" />,
];

export default function App() {
  return (
    <Screen>
      <GlobalStyle />
      <TabStrip>
        <Tab>
          <MdPublic size={17} />
          <TabTitle>入口页</TabTitle>
          <IconButton $w={14} aria-label="关闭标签页"><MdClose size={13} /></IconButton>
        </Tab>
        <IconButton $w={44} aria-label="新标签页"><MdAdd size={18} /></IconButton>
        <WindowButtons>
          <IconButton $w={46} aria-label="搜索标签页"><Chevron d="M1 3l5 6 5-6" size={11} /></IconButton>
          <IconButton $w={46} aria-label="最小化"><svg width="11" height="1"><rect width="11" height="1" fill="#111" /></svg></IconButton>
          <IconButton $w={46} aria-label="还原">
            <svg width="11" height="11" fill="none" stroke="#111"><path d="M.5 2.500h8v8h-8zM2.500 2V.5h8v8H9" /></svg>
          </IconButton>
          <IconButton $w={46} aria-label="关闭"><svg width="11" height="11" stroke="#111" strokeWidth="1.200"><path d="M.5.5l10 10M10.500.5l-10 10" /></svg></IconButton>
        </WindowButtons>
      </TabStrip>
      <Toolbar>
        <IconButton aria-label="后退"><MdArrowBack size={19} /></IconButton>
        <IconButton $dim aria-label="前进"><MdArrowForward size={19} /></IconButton>
        <IconButton aria-label="刷新"><MdRefresh size={20} /></IconButton>
        <AddressBar>
          <MdInfoOutline size={18} />
          <Url><b>localhost:</b>8080/zhinengcangchu/index.jsp#</Url>
          <IconButton aria-label="密码"><MdVpnKey size={17} /></IconButton>
          <IconButton aria-label="缩放"><MdZoomIn size={19} /></IconButton>
          <IconButton aria-label="分享"><Share /></IconButton>
          <IconButton aria-label="收藏"><MdStarBorder size={19} /></IconButton>
        </AddressBar>
        <IconButton aria-label="截图"><MdPhotoCamera size={17} color="#8a8a8a" /></IconButton>
        <IconButton aria-label="拦截"><Shield /></IconButton>
        <IconButton aria-label="查找"><BagSearch /></IconButton>
        <IconButton aria-label="复制"><CopyPages /></IconButton>
        <IconButton aria-label="Vue"><Vue /></IconButton>
        <IconButton aria-label="翻译"><Translate /></IconButton>
        <IconButton aria-label="扩展程序"><MdExtension size={18} /></IconButton>
        <IconButton aria-label="下载"><Download /></IconButton>
        <IconButton aria-label="侧边栏"><SidePanel /></IconButton>
        <IconButton><Avatar>S</Avatar></IconButton>
        <IconButton aria-label="菜单"><MdMoreVert size={20} /></IconButton>
      </Toolbar>

      <Page>
        <Sidebar>
          <Brand href="#">仓储</Brand>
          <nav>
            {menu.map((name, i) => (
              <NavItem key={name} href="#">
                {i === 0 ? <Gauge /> : <Monitor />}
                {name}
                {name === hovered && (
                  <>
                    <Flyout>{name}</Flyout>
                    <Hand />
                  </>
                )}
              </NavItem>
            ))}
          </nav>
        </Sidebar>
        <Main>
          <TopBar>
            <UserButton>admin <Caret w={10} /></UserButton>
          </TopBar>
          <TitleBar>
            <Title>盘点管理</Title>
            <Breadcrumb>
              <a href="#"><FaHome size={17} />主页</a>
              <Chevron d="M4 1l5 5-5 5" />
              <a href="#">盘点管理</a>
              <Chevron d="M4 1l5 5-5 5" />
              <a href="#">盘点列表管理</a>
            </Breadcrumb>
          </TitleBar>
          <Viewport>
            <Scrolled>
              <Card>
                <FormBody>
                  <Row>
                    <Field id="unit" label="单位" value="瓶" />
                    <Field id="price" label="单价" value="20" />
                  </Row>
                  <Row $tight>
                    <Editor id="detail" label="商品详情" value="茉莉花茶的详情" off />
                    <Field id="operator" label="操作人" value="2" />
                  </Row>
                  <Row>
                    <Field id="name" label="盘点名" value="123" />
                    <Editor id="remark" label="备注" value="" />
                  </Row>
                  <Row>
                    <Field id="before" label="盘点前数量" value="115" />
                    <Field id="after" label="盘点后数量" value="3" />
                  </Row>
                  <Row>
                    <Field id="created" label="插入时间" value="2024-03-04 22:47:38" />
                  </Row>
                </FormBody>
              </Card>
            </Scrolled>
            <Track $w={13}>
              <TrackArrow $h={18}><Caret w={8} up /></TrackArrow>
              <InnerThumb />
            </Track>
          </Viewport>
          <Footer>欢迎使用仓储管理系统</Footer>
        </Main>
        <Track $w={17} $edge={2}>
          <TrackArrow $h={17} $soft><Caret w={8} up /></TrackArrow>
          <OuterThumb />
          <TrackArrow $h={17} $down><Caret w={8} /></TrackArrow>
        </Track>
        <BubbleClip><Bubble /></BubbleClip>
        <StatusBubble>localhost:8080/zhinengcangchu/index.jsp#</StatusBubble>
      </Page>

      <Taskbar>
        <StartButton aria-label="开始">
          <svg width="16" height="16" viewBox="0 0 16 16" fill="#fff"><path d="M0 2.300l7-1v6.200H0zM8 1.100L16 0v7.500H8zM0 8.500h7v6.200l-7-1zM8 8.500h8V16l-8-1.100z" /></svg>
        </StartButton>
        <SearchBox>
          <Magnify c="#222" w={1.3} size={18} />
          <SearchInput placeholder="搜索" aria-label="搜索" />
          <Landscape />
        </SearchBox>
        <Apps>
          {apps.map(a => (
            <AppButton key={a.name} $open={a.open} $tone={a.tone} aria-label={a.name}>{a.icon}</AppButton>
          ))}
        </Apps>
        <Tray>
          {tray.map((icon, i) => <TrayItem key={i}>{icon}</TrayItem>)}
          <TrayItem>英</TrayItem>
          <TrayItem $w={34}><Sogou /></TrayItem>
          <TrayItem $w={46}>22:47</TrayItem>
          <TrayItem $w={40}><Notice /></TrayItem>
          <TrayItem $w={8} aria-label="显示桌面" />
          <DesktopEdge />
        </Tray>
      </Taskbar>
    </Screen>
  );
}
